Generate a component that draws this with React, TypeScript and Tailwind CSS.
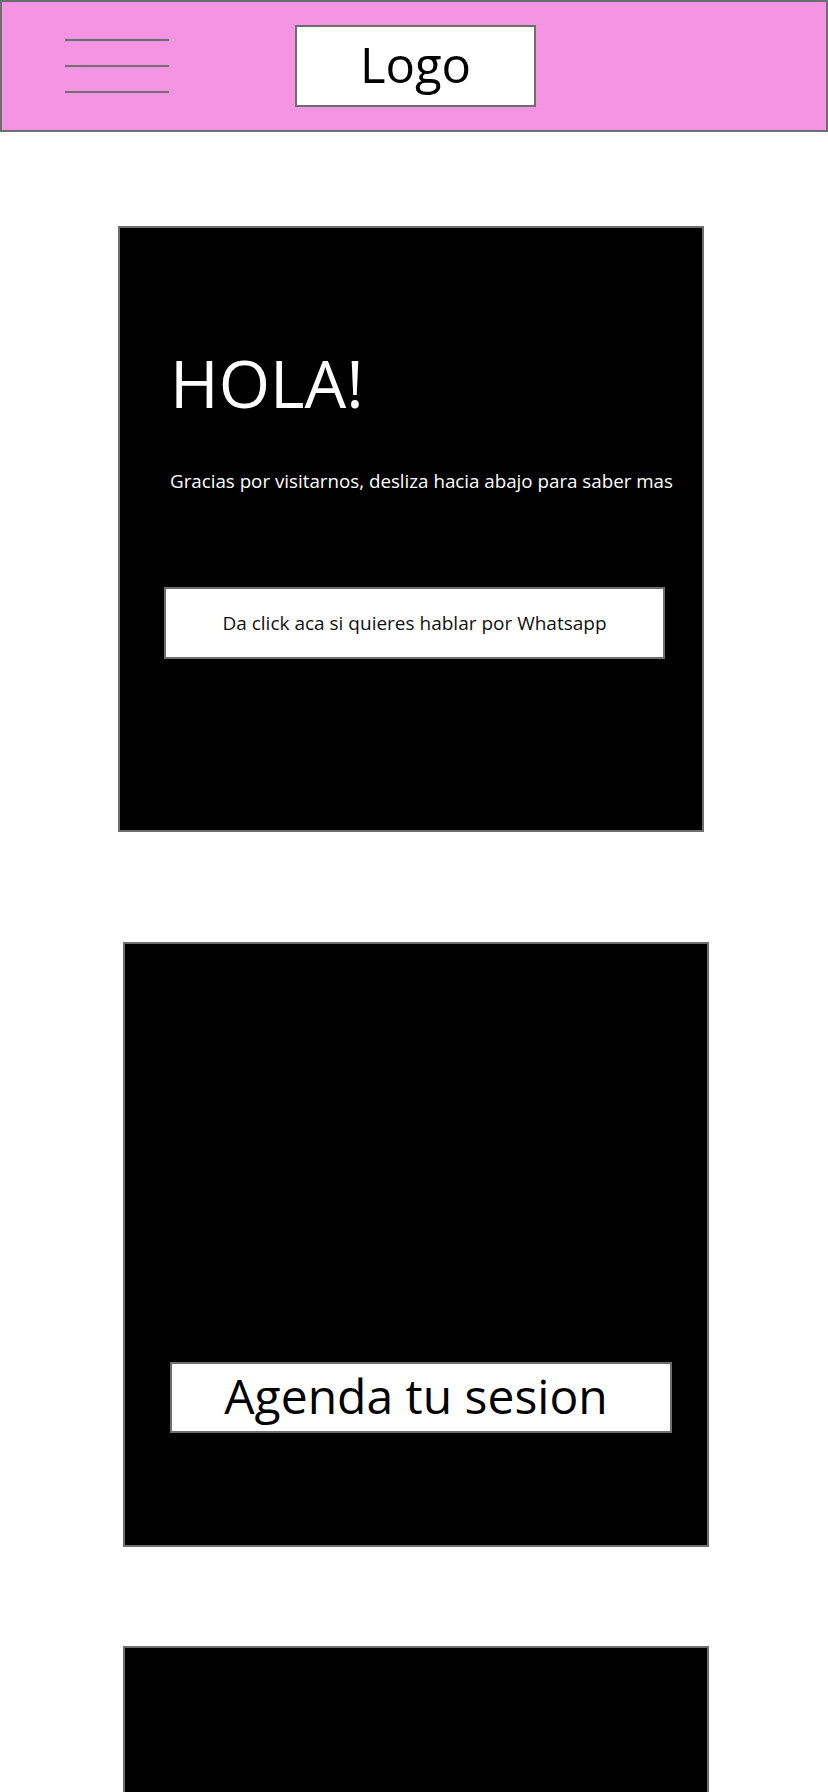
import React from 'react';

const font = { fontFamily: '"Open Sans", "Noto Sans", sans-serif' };

const Header = () => (
    <header className="flex h-[132px] w-full items-center border-2 border-[#6e6e6e] bg-[#f494e2]">
        {/* hamburger */}
        <div className="ml-[63px] flex w-[104px] flex-col gap-[24px]">
            <span className="block h-[2px] w-full bg-[#707070]" />
            <span className="block h-[2px] w-full bg-[#707070]" />
            <span className="block h-[2px] w-full bg-[#707070]" />
        </div>
        <div className="ml-[126px] flex h-[82px] w-[241px] items-center justify-center border-2 border-[#6e6e6e] bg-white">
            <span className="text-[49px] leading-none text-black pb-[4px]">Logo</span>
        </div>
    </header>
);

export default function App() {
    return (
        <div className="min-h-[1792px] w-full overflow-hidden bg-white" style={font}>
            <Header />

            <section className="ml-[118px] mt-[94px] flex h-[606px] w-[586px] flex-col border-2 border-[#6e6e6e] bg-black">
                <h1 className="ml-[50px] mt-[121px] text-[66px] font-normal leading-none text-white">HOLA!</h1>
                <p className="ml-[50px] mt-[57px] text-[18.75px] leading-none text-white">
                    Gracias por visitarnos, desliza hacia abajo para saber mas
                </p>
                <button className="ml-[44px] mt-[96px] flex h-[72px] w-[501px] items-center justify-center border-2 border-[#6e6e6e] bg-white text-[19px] text-[#111]">
                    Da click aca si quieres hablar por Whatsapp
                </button>
            </section>

            <section className="ml-[123px] mt-[110px] flex h-[605px] w-[586px] flex-col border-2 border-[#6e6e6e] bg-black">
                <button className="ml-[45px] mt-[418px] flex h-[71px] w-[502px] items-center justify-center border-2 border-[#6e6e6e] bg-white pb-[4px] pr-[10px] text-[48px] leading-none text-black">
                    Agenda tu sesion
                </button>
            </section>

            <section className="ml-[123px] mt-[99px] h-[300px] w-[586px] border-2 border-[#6e6e6e] bg-black" />
        </div>
    );
}
